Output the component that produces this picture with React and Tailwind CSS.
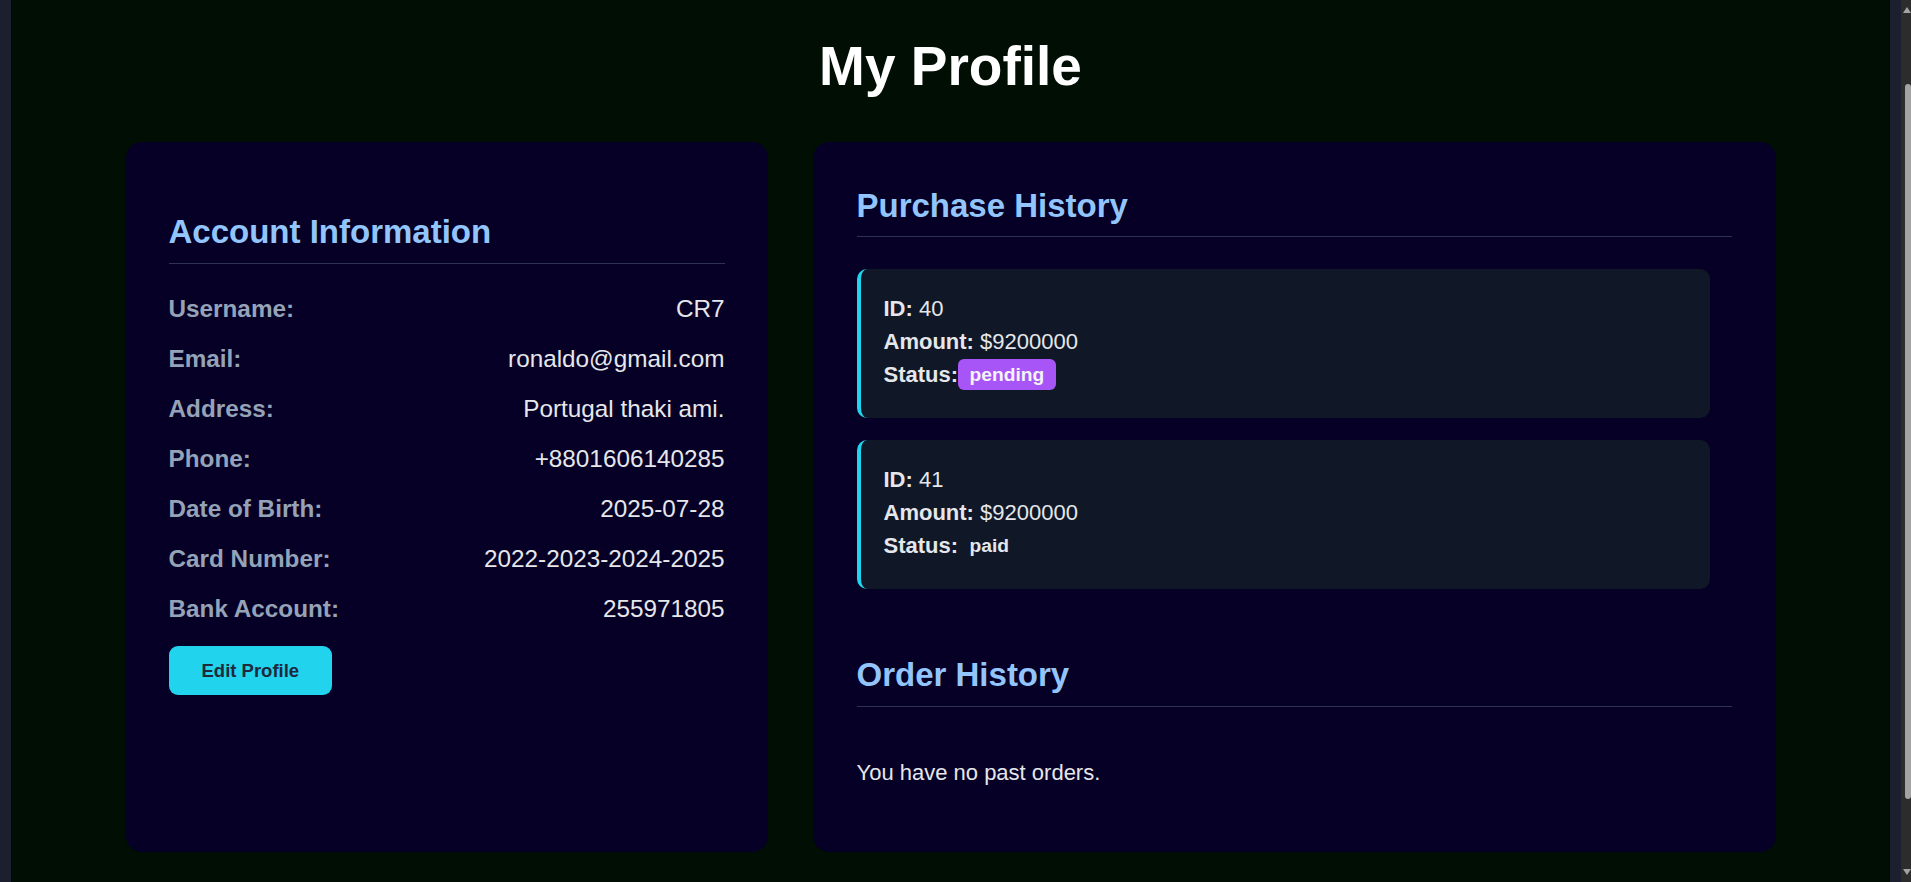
import React from "react";

function InfoRow({ label, value }) {
  return (
    <div className="flex items-center justify-between leading-[28px] text-[24.3px]">
      <span className="font-bold text-[#94a3b8]">{label}</span>
      <span className="text-[#e5e7eb]">{value}</span>
    </div>
  );
}

function Purchase({ id, amount, status }) {
  const pending = status === "pending";
  return (
    <div className="mr-[22px] rounded-[10px] border-l-4 border-[#22d3ee] bg-[#101828] pl-[23px] pt-[23px] pb-[27px] text-[22px] leading-[33px] text-[#e5e7eb]">
      <div>
        <span className="font-bold">ID:</span> {id}
      </div>
      <div>
        <span className="font-bold">Amount:</span> ${amount}
      </div>
      <div className="flex items-center">
        <span className="font-bold">Status:</span>
        {pending ? (
          <span className="rounded-[6px] bg-[#a855f7] px-[11.5px] text-[19.2px] font-bold leading-[31px] text-[#f3f4f6]">
            pending
          </span>
        ) : (
          <span className="px-[11.5px] text-[19.2px] font-bold leading-[31px] text-[#e5e7eb]">
            paid
          </span>
        )}
      </div>
    </div>
  );
}

export default function App() {
  return (
    <div className="flex h-[882px] w-full overflow-hidden bg-[#1b1f2e] font-['Liberation_Sans',Arial,sans-serif]">
      <div className="mx-[11px] flex-1 bg-[#000e03]">
        <h1 className="pt-[35px] text-center text-[55px] font-bold leading-[63px] text-white">
          My Profile
        </h1>
        <div className="mx-auto mt-[44px] grid w-[1650px] grid-cols-[2fr_3fr] gap-[45px]">
          {/* Account card */}
          <div className="rounded-[16px] bg-[#070026] px-[43px] pt-[43px]">
            <h2 className="mt-[28px] border-b border-[#2f3352] pb-[12px] text-[33px] font-bold leading-[38px] text-[#93c5fd]">
              Account Information
            </h2>
            <div className="mt-[31px] flex flex-col gap-[22px]">
              <InfoRow label="Username:" value="CR7" />
              <InfoRow label="Email:" value="ronaldo@gmail.com" />
              <InfoRow label="Address:" value="Portugal thaki ami." />
              <InfoRow label="Phone:" value="+8801606140285" />
              <InfoRow label="Date of Birth:" value="2025-07-28" />
              <InfoRow label="Card Number:" value="2022-2023-2024-2025" />
              <InfoRow label="Bank Account:" value="255971805" />
            </div>
            <button className="mt-[23px] flex h-[49px] items-center rounded-[9px] bg-[#22d3ee] px-[33px] text-[18.5px] font-bold text-[#1e293b]">
              Edit Profile
            </button>
          </div>

          {/* History card */}
          <div className="rounded-[16px] bg-[#070026] px-[44px] pt-[45px] pb-[44px]">
            <h2 className="border-b border-[#2f3352] pb-[11px] text-[33px] font-bold leading-[38px] text-[#93c5fd]">
              Purchase History
            </h2>
            <div className="mt-[32px] flex flex-col gap-[22px]">
              <Purchase id="40" amount="9200000" status="pending" />
              <Purchase id="41" amount="9200000" status="paid" />
            </div>
            <h2 className="mt-[67px] border-b border-[#2f3352] pb-[12px] text-[33px] font-bold leading-[38px] text-[#93c5fd]">
              Order History
            </h2>
            <p className="mt-[49px] mb-[19px] text-[22px] leading-[33px] text-[#e5e7eb]">
              You have no past orders.
            </p>
          </div>
        </div>
      </div>
      {/* scrollbar */}
      <div className="flex w-[10px] flex-col items-end bg-[#2c2c2c]">
        <div className="mt-[7px] h-0 w-0 border-x-[4px] border-b-[6px] border-x-transparent border-b-[#a3a3a3]" />
        <div className="mt-[71px] h-[715px] w-[6px] rounded-[3px] bg-[#a3a3a3]" />
        <div className="mt-[70px] h-0 w-0 border-x-[4px] border-t-[6px] border-x-transparent border-t-[#a3a3a3]" />
      </div>
    </div>
  );
}
